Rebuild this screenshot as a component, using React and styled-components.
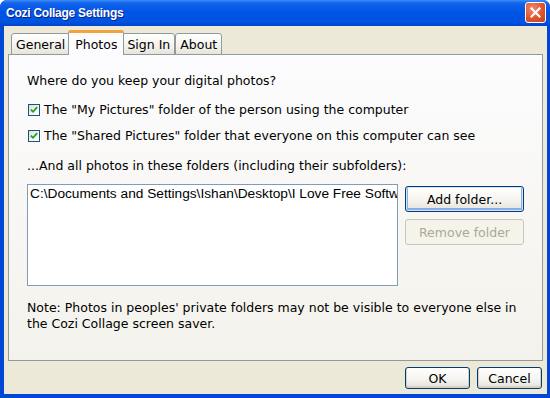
import React from "react";
import styled, { createGlobalStyle } from "styled-components";

const Global = createGlobalStyle`
  html, body { margin: 0; padding: 0; overflow: hidden; background: #fff; }
  * { box-sizing: border-box; }
`;

const Window = styled.div`
  width: 550px;
  height: 398px;
  display: flex;
  flex-direction: column;
  background: #0047d6;
  border-radius: 7px 7px 0 0;
  overflow: hidden;
  font-family: "DejaVu Sans", sans-serif;
`;

const TitleBar = styled.div`
  height: 26px;
  flex: none;
  display: flex;
  align-items: center;
  justify-content: space-between;
  padding: 0 4px 1px 6px;
  background: linear-gradient(#3d8ff7 0%, #1263ec 12%, #0055e5 45%, #0052e0 85%, #0043cc 100%);
`;

const Title = styled.div`
  color: #fff;
  font-family: "Liberation Sans", Arial, sans-serif;
  font-weight: bold;
  font-size: 12px;
  letter-spacing: -0.25px;
  text-shadow: 1px 1px 0 #0a1e8c;
`;

const CloseButton = styled.div`
  width: 21px;
  height: 21px;
  border: 1px solid #fff;
  border-radius: 3px;
  background: radial-gradient(circle at 35% 30%, #f08a6c 0%, #e0542c 55%, #c5401c 100%);
  display: flex;
  align-items: center;
  justify-content: center;
`;

const Frame = styled.div`
  flex: 1;
  display: flex;
  margin: 0 5px 5px 4px;
`;

const Body = styled.div`
  flex: 1;
  display: flex;
  flex-direction: column;
  background: #ece9d8;
  padding: 5px 4px 5px 4px;
`;

const TabStrip = styled.div`
  display: flex;
  align-items: flex-end;
  height: 24px;
  padding-left: 3px;
  position: relative;
  z-index: 1;
  margin-bottom: -1px;
`;

const Tab = styled.div`
  height: ${(p) => (p.$active ? "25px" : "22px")};
  margin: ${(p) => (p.$active ? "0 -2px" : "0")};
  padding: 0 ${(p) => (p.$active ? "6px" : "4px")};
  display: flex;
  align-items: center;
  font-size: 12.5px;
  color: #000;
  border: 1px solid #919b9c;
  border-bottom: ${(p) => (p.$active ? "none" : "1px solid #919b9c")};
  border-top: ${(p) => (p.$active ? "3px solid #f2a33a" : "1px solid #919b9c")};
  border-radius: 3px 3px 0 0;
  background: ${(p) =>
    p.$active ? "#fcfcfe" : "linear-gradient(#ffffff 0%, #f3f2ec 60%, #e6e4da 100%)"};
  position: relative;
  z-index: ${(p) => (p.$active ? 2 : 1)};
`;

const Panel = styled.div`
  height: 307px;
  border: 1px solid #919b9c;
  background: linear-gradient(#fcfcfe 0%, #f7f6f2 60%, #f3f2ec 100%);
  padding: 18px 18px 0 18px;
  display: flex;
  flex-direction: column;
  font-size: 12.5px;
  color: #000;
`;

const Line = styled.div`
  height: 16px;
  line-height: 16px;
  white-space: nowrap;
  margin-top: ${(p) => p.$mt || 0}px;
`;

const CheckRow = styled.label`
  display: flex;
  align-items: center;
  gap: 4px;
  height: 16px;
  line-height: 16px;
  white-space: nowrap;
  padding-left: 1px;
  margin-top: ${(p) => p.$mt || 0}px;
`;

const Box = styled.span`
  width: 12px;
  height: 12px;
  flex: none;
  border: 1px solid #1c5180;
  background: linear-gradient(135deg, #dcdcd5 0%, #f3f3ef 50%, #ffffff 100%);
  display: flex;
  align-items: center;
  justify-content: center;
`;

const FolderRow = styled.div`
  display: flex;
  gap: 7px;
  margin-top: 10px;
`;

const ListBox = styled.div`
  width: 371px;
  height: 102px;
  border: 1px solid #7f9db9;
  background: #fff;
  overflow: hidden;
  padding: 1px 2px;
  font-family: "Liberation Sans", Arial, sans-serif;
  font-size: 13.7px;
  line-height: 16px;
  white-space: nowrap;
  color: #000;
`;

const SideButtons = styled.div`
  display: flex;
  flex-direction: column;
  gap: 7px;
  padding-top: 2px;
`;

const Button = styled.div`
  width: ${(p) => p.$w}px;
  height: ${(p) => p.$h || 26}px;
  display: flex;
  align-items: center;
  justify-content: center;
  font-size: 12.5px;
  border-radius: 3px;
  border: 1px solid ${(p) => (p.$disabled ? "#c9c7ba" : "#003c74")};
  color: ${(p) => (p.$disabled ? "#aca899" : "#000")};
  background: ${(p) =>
    p.$disabled ? "#f5f4ea" : "linear-gradient(#ffffff 0%, #f5f4f0 55%, #e3e1d8 100%)"};
  box-shadow: ${(p) =>
    p.$default
      ? "inset 0 0 0 1px #cee7ff, inset 0 -1px 0 2px #89ade4"
      : p.$disabled
      ? "none"
      : "inset 0 -1px 0 1px #d6d0c5"};
`;

const Note = styled.div`
  margin-top: 14px;
  line-height: 16px;
`;

const Footer = styled.div`
  display: flex;
  justify-content: flex-end;
  gap: 7px;
  margin-top: 6px;
  padding-right: 1px;
`;

const Check = () => (
  <svg width="8" height="8" viewBox="0 0 8 8">
    <path d="M0.8 3.6 L3 5.8 L7.2 1.2" stroke="#21a121" strokeWidth="1.8" fill="none" />
  </svg>
);

const XIcon = () => (
  <svg width="11" height="11" viewBox="0 0 11 11">
    <path d="M1.5 1.5 L9.5 9.5 M9.5 1.5 L1.5 9.5" stroke="#fff" strokeWidth="2.2" strokeLinecap="square" />
  </svg>
);

export default function App() {
  return (
    <>
      <Global />
      <Window>
        <TitleBar>
          <Title>Cozi Collage Settings</Title>
          <CloseButton>
            <XIcon />
          </CloseButton>
        </TitleBar>
        <Frame>
          <Body>
            <TabStrip>
              <Tab>General</Tab>
              <Tab $active>Photos</Tab>
              <Tab>Sign In</Tab>
              <Tab>About</Tab>
            </TabStrip>
            <Panel>
              <Line>Where do you keep your digital photos?</Line>
              <CheckRow $mt={13}>
                <Box><Check /></Box>
                The "My Pictures" folder of the person using the computer
              </CheckRow>
              <CheckRow $mt={10}>
                <Box><Check /></Box>
                The "Shared Pictures" folder that everyone on this computer can see
              </CheckRow>
              <Line $mt={14}>...And all photos in these folders (including their subfolders):</Line>
              <FolderRow>
                <ListBox>C:\Documents and Settings\Ishan\Desktop\I Love Free Software</ListBox>
                <SideButtons>
                  <Button $w={119} $default>Add folder...</Button>
                  <Button $w={119} $disabled>Remove folder</Button>
                </SideButtons>
              </FolderRow>
              <Note>
                Note: Photos in peoples' private folders may not be visible to everyone else in
                <br />
                the Cozi Collage screen saver.
              </Note>
            </Panel>
            <Footer>
              <Button $w={65} $h={22}>OK</Button>
              <Button $w={65} $h={22}>Cancel</Button>
            </Footer>
          </Body>
        </Frame>
      </Window>
    </>
  );
}
